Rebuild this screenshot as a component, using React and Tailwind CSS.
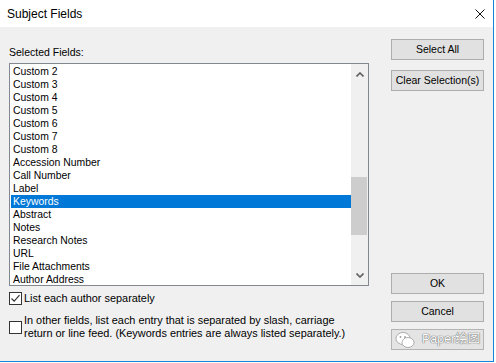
const fields = [
  'Custom 2',
  'Custom 3',
  'Custom 4',
  'Custom 5',
  'Custom 6',
  'Custom 7',
  'Custom 8',
  'Accession Number',
  'Call Number',
  'Label',
  'Keywords',
  'Abstract',
  'Notes',
  'Research Notes',
  'URL',
  'File Attachments',
  'Author Address',
];

function DlgButton({ children, className = '' }) {
  return (
    <button className={`w-[93px] h-[21px] bg-[#e1e1e1] border border-[#adadad] flex items-center justify-center text-[10.5px] text-black ${className}`}>
      {children}
    </button>
  );
}

function Checkbox({ checked }) {
  return (
    <div className="w-[13px] h-[13px] shrink-0 border border-[#333333] bg-white flex items-center justify-center">
      {checked && (
        <svg width="11" height="11" viewBox="0 0 11 11">
          <path d="M1.5 5.5 L4.2 8.2 L9.5 2.2" fill="none" stroke="#333333" strokeWidth="1.2" />
        </svg>
      )}
    </div>
  );
}

export default function App() {
  return (
    <div className="w-[496px] h-[363px] bg-white text-black font-['Liberation_Sans',Arial,sans-serif]">
      <div className="w-[494px] h-[362px] border-r border-b border-[#1883d7] flex flex-col">

        {/* Title bar */}
        <div className="h-[27px] bg-white flex items-center justify-between pl-[7px] pr-[8px] shrink-0">
          <span className="text-[12px] leading-none">Subject Fields</span>
          <svg width="10" height="10" viewBox="0 0 10 10">
            <path d="M0.5 0.5 L9.5 9.5 M9.5 0.5 L0.5 9.5" stroke="#111" strokeWidth="1" />
          </svg>
        </div>

        {/* Body */}
        <div className="flex-1 bg-[#f0f0f0] flex">

          {/* Left column */}
          <div className="w-[369px] pl-[9px] pt-[19px] flex flex-col">
            <div className="text-[10.5px] leading-[13px]">Selected Fields:</div>

            <div className="mt-[4px] h-[223px] border border-[#828790] bg-white flex overflow-hidden">
              <div className="flex-1 pt-[1px] pl-[1px] overflow-hidden">
                {fields.map((f) => (
                  <div
                    key={f}
                    className={`h-[13px] pl-[2px] text-[10.4px] leading-[13px] whitespace-nowrap ${f === 'Keywords' ? 'bg-[#0078d7] text-white' : ''}`}
                  >
                    {f}
                  </div>
                ))}
              </div>
              <div className="w-[17px] bg-[#f0f0f0] flex flex-col">
                <div className="h-[20px] flex items-center justify-center">
                  <svg width="8" height="5" viewBox="0 0 8 5">
                    <path d="M0.5 4.5 L4 1 L7.5 4.5" fill="none" stroke="#606060" strokeWidth="1.6" />
                  </svg>
                </div>
                <div className="h-[93px]" />
                <div className="h-[58px] bg-[#cdcdcd] mr-[1px]" />
                <div className="flex-1" />
                <div className="h-[20px] flex items-center justify-center">
                  <svg width="8" height="5" viewBox="0 0 8 5">
                    <path d="M0.5 0.5 L4 4 L7.5 0.5" fill="none" stroke="#606060" strokeWidth="1.6" />
                  </svg>
                </div>
              </div>
            </div>

            <div className="mt-[6px] flex items-center gap-[2px]">
              <Checkbox checked />
              <span className="text-[10.9px] leading-[13px]">List each author separately</span>
            </div>

            <div className="mt-[9px] flex items-center gap-[2px]">
              <Checkbox />
              <span className="text-[10.9px] leading-[13px] whitespace-nowrap">
                In other fields, list each entry that is separated by slash, carriage
                <br />
                return or line feed. (Keywords entries are always listed separately.)
              </span>
            </div>
          </div>

          {/* Right column */}
          <div className="ml-[22px] w-[93px] pt-[12px] pb-[11px] flex flex-col">
            <DlgButton>Select All</DlgButton>
            <DlgButton className="mt-[10px]">Clear Selection(s)</DlgButton>
            <div className="flex-1" />
            <DlgButton>OK</DlgButton>
            <DlgButton className="mt-[7px]">Cancel</DlgButton>
            <button className="mt-[7px] w-[93px] h-[21px] bg-[#e4e4e4] border border-[#b4b4b4] flex items-center pl-[3px] gap-[7px] overflow-hidden">
              <svg width="20" height="18" viewBox="0 0 20 18" className="shrink-0">
                <ellipse cx="8" cy="7.5" rx="7" ry="6" fill="#ffffff" stroke="#9a9a9a" strokeWidth="0.8" />
                <ellipse cx="13" cy="11.5" rx="6" ry="5" fill="#ffffff" stroke="#9a9a9a" strokeWidth="0.8" />
                <circle cx="5.5" cy="6" r="0.9" fill="#9a9a9a" />
                <circle cx="10" cy="6" r="0.9" fill="#9a9a9a" />
              </svg>
              <span className="text-[12.5px] leading-none whitespace-nowrap text-white font-['Liberation_Sans','Noto_Sans_CJK_SC',sans-serif] [text-shadow:0_0_1px_#555,0_0_1px_#555]">
                Paper绘图
              </span>
            </button>
          </div>
        </div>
      </div>
    </div>
  );
}
